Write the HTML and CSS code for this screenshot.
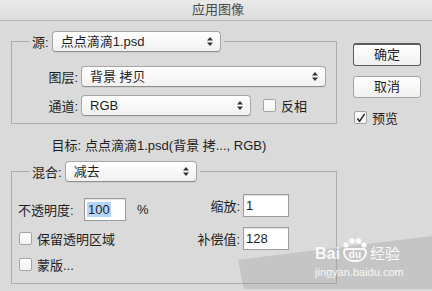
FILE: index.html
```html
<!DOCTYPE html>
<html lang="zh-CN">
<head>
    <meta charset="UTF-8">
    <title>应用图像</title>
<link rel="stylesheet" href="styles.css">
</head>
<body>

    <div class="titlebar">应用图像</div>

    <div class="dialog">
        <div class="main">

            <fieldset class="group source">
                <legend>
                    <span class="legend-label">源:</span>
                    <div class="select w-src">点点滴滴1.psd
                        <svg class="arrows" width="6" height="9" viewBox="0 0 6 9"><path d="M0 3.5L3 0L6 3.5Z M0 5.5L3 9L6 5.5Z" fill="#333"/></svg>
                    </div>
                </legend>
                <div class="row">
                    <span class="label">图层:</span>
                    <div class="select w-layer">背景 拷贝
                        <svg class="arrows" width="6" height="9" viewBox="0 0 6 9"><path d="M0 3.5L3 0L6 3.5Z M0 5.5L3 9L6 5.5Z" fill="#333"/></svg>
                    </div>
                </div>
                <div class="row">
                    <span class="label">通道:</span>
                    <div class="select w-chan">RGB
                        <svg class="arrows" width="6" height="9" viewBox="0 0 6 9"><path d="M0 3.5L3 0L6 3.5Z M0 5.5L3 9L6 5.5Z" fill="#333"/></svg>
                    </div>
                    <div class="check invert"><span class="box"></span>反相</div>
                </div>
            </fieldset>

            <div class="target">
                <span class="label">目标:</span>
                <span class="target-value">点点滴滴1.psd(背景 拷..., RGB)</span>
            </div>

            <fieldset class="group blend">
                <legend>
                    <span class="legend-label">混合:</span>
                    <div class="select w-blend">减去
                        <svg class="arrows" width="6" height="9" viewBox="0 0 6 9"><path d="M0 3.5L3 0L6 3.5Z M0 5.5L3 9L6 5.5Z" fill="#333"/></svg>
                    </div>
                </legend>
                <div class="blend-body">
                    <div class="blend-left">
                        <div class="field">
                            <span class="field-label">不透明度:</span>
                            <div class="input w-opacity"><span class="selected">100</span></div>
                            <span class="unit">%</span>
                        </div>
                        <div class="check"><span class="box"></span>保留透明区域</div>
                        <div class="check"><span class="box"></span>蒙版...</div>
                    </div>
                    <div class="blend-right">
                        <div class="field">
                            <span class="field-label r">缩放:</span>
                            <div class="input w-num">1</div>
                        </div>
                        <div class="field">
                            <span class="field-label r">补偿值:</span>
                            <div class="input w-num">128</div>
                        </div>
                    </div>
                </div>
            </fieldset>

        </div>

        <div class="side">
            <div class="button default">确定</div>
            <div class="button">取消</div>
            <div class="check preview">
                <span class="box">
                    <svg width="12" height="12" viewBox="0 0 12 12"><path d="M2.5 6.5L5 9.5L10.5 1.5" fill="none" stroke="#222" stroke-width="1.6"/></svg>
                </span>预览
            </div>
        </div>
    </div>

    <!-- watermark over the corner -->
    <div class="watermark">
        <div class="wm-logo">
            <span>Bai</span>
            <span class="paw">
                <svg class="paw-dots" width="26" height="10" viewBox="0 0 26 10">
                    <circle cx="4" cy="7" r="2.6" fill="#fff"/>
                    <circle cx="10" cy="3" r="2.8" fill="#fff"/>
                    <circle cx="16.5" cy="3" r="2.8" fill="#fff"/>
                    <circle cx="22" cy="7" r="2.6" fill="#fff"/>
                </svg>
                <span class="paw-pad">du</span>
            </span>
            <span class="wm-cn">经验</span>
        </div>
        <div class="wm-url">jingyan.baidu.com</div>
    </div>

</body>
</html>
```

FILE: styles.css
```css
/* Reset */
* {
    padding: 0;
    margin: 0;
    box-sizing: border-box;
}

body {
    font-family: "Liberation Sans", "Noto Sans CJK SC", sans-serif;
    font-size: 13px;
    color: #1e1e1e;
    background-color: #dadada;
    width: 432px;
    height: 291px;
    overflow: hidden;
    position: relative;
}

/* Title bar */
.titlebar {
    height: 21px;
    line-height: 20px;
    text-align: center;
    color: #4a4a4a;
    background: linear-gradient(#e9e9e9, #dcdcdc);
    border-bottom: 1px solid #b4b4b4;
    padding-left: 4px;
}

/* Dialog layout */
.dialog {
    display: flex;
    gap: 16px;
    padding-left: 11px;
}

.main {
    width: 326px;
}

/* Group boxes */
.group {
    border: 1px solid #adadad;
    padding: 0;
    width: 326px;
}

.group legend {
    display: flex;
    align-items: center;
    height: 21px;
    margin-left: 17px;
    padding: 0 3px;
}

.legend-label {
    margin-right: 3px;
}

.source {
    margin-top: 10px;
    padding: 14px 0 7px 0;
}

.row {
    display: flex;
    align-items: center;
    height: 21px;
}

.row + .row {
    margin-top: 8px;
}

.label {
    width: 66px;
    text-align: right;
    margin-right: 3px;
}

/* Popup menus */
.select {
    position: relative;
    height: 21px;
    line-height: 19px;
    padding-left: 8px;
    background: linear-gradient(#ffffff, #f1f1f1);
    border: 1px solid #a6a6a6;
    border-bottom-color: #8e8e8e;
    border-radius: 4px;
    box-shadow: 0 1px 0 rgba(0, 0, 0, 0.05);
}

.arrows {
    position: absolute;
    right: 7px;
    top: 5px;
}

.w-src { width: 169px; }
.w-layer { width: 245px; }
.w-chan { width: 170px; }
.w-blend { width: 132px; }

/* Checkboxes */
.check {
    display: flex;
    align-items: center;
    height: 18px;
}

.box {
    width: 13px;
    height: 13px;
    border: 1px solid #a3a3a3;
    border-radius: 2px;
    background: linear-gradient(#ffffff, #f3f3f3);
    margin-right: 5px;
    display: flex;
}

.invert {
    margin-left: 12px;
}

/* Target line */
.target {
    display: flex;
    height: 16px;
    line-height: 16px;
    margin-top: 14px;
}

.target .label {
    width: 70px;
    margin-right: 4px;
}

/* Blend group */
.blend {
    margin-top: 7px;
    height: 123px;
}

.blend-body {
    display: flex;
    justify-content: space-between;
    padding: 0 47px 0 6px;
}

.blend-left {
    padding-top: 16px;
}

.blend-left .check {
    margin-top: 8px;
    margin-left: 1px;
}

.blend-left .check + .check {
    margin-top: 8px;
}

.blend-right {
    padding-top: 12px;
}

.blend-right .field + .field {
    margin-top: 10px;
}

.field {
    display: flex;
    align-items: center;
    height: 23px;
}

.field-label {
    width: 66px;
}

.field-label.r {
    width: 50px;
    text-align: right;
    margin-right: 3px;
}

.input {
    height: 23px;
    line-height: 21px;
    padding-left: 2px;
    background-color: #fff;
    border: 1px solid #9b9b9b;
    box-shadow: inset 0 1px 1px rgba(0, 0, 0, 0.12);
}

.w-opacity { width: 42px; }
.w-num { width: 46px; }

.selected {
    background-color: #b5d5fb;
    padding: 0 1px;
}

.unit {
    margin-left: 11px;
}

/* Side buttons */
.side {
    width: 68px;
    padding-top: 22px;
}

.button {
    height: 22px;
    line-height: 20px;
    text-align: center;
    background: linear-gradient(#ffffff, #f0f0f0);
    border: 1px solid #a3a3a3;
    border-radius: 3px;
    margin-bottom: 10px;
}

.button.default {
    height: 23px;
    border: 1px solid #5d5d5d;
    border-top-width: 2px;
    line-height: 19px;
}

.preview {
    margin-top: 8px;
    margin-left: 1px;
}

/* Watermark */
.watermark {
    position: absolute;
    left: 238px;
    top: 236px;
    width: 194px;
    height: 53px;
    color: #fff;
    padding: 2px 0 0 77px;
}

.watermark::before {
    content: "";
    position: absolute;
    inset: 0;
    background: rgba(150, 150, 150, 0.3);
    clip-path: polygon(0 45%, 100% 0, 100% 100%, 3% 100%);
}

.wm-logo {
    position: relative;
    display: flex;
    align-items: flex-end;
    font-size: 16px;
    font-weight: bold;
    line-height: 16px;
    opacity: 0.9;
}

.paw {
    display: flex;
    flex-direction: column;
    align-items: center;
    width: 28px;
    margin: 0 1px;
}

.paw-pad {
    display: block;
    width: 24px;
    height: 14px;
    border: 2px solid #fff;
    border-radius: 4px 4px 10px 10px;
    font-size: 10px;
    line-height: 10px;
    text-align: center;
}

.wm-cn {
    font-weight: normal;
    font-size: 15px;
}

.wm-url {
    position: relative;
    font-size: 11px;
    line-height: 13px;
    margin-top: 4px;
    opacity: 0.9;
}
```
